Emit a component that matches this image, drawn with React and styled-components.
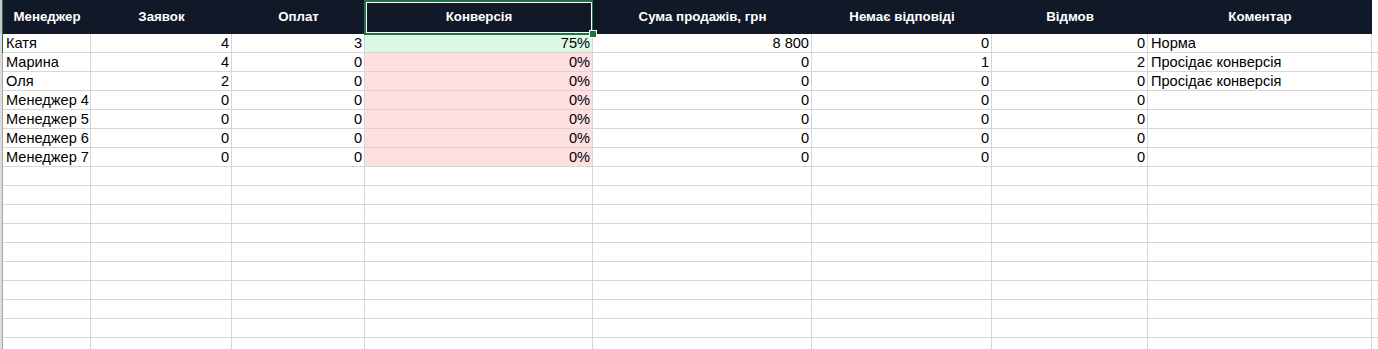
import React from "react";
import styled, { createGlobalStyle, css } from "styled-components";

const Global = createGlobalStyle`
  html, body { margin: 0; padding: 0; background: #fff; }
  body { font-family: "Liberation Sans", Arial, sans-serif; overflow: hidden; }
`;

const COLS = "3px 88px 141px 133px 228px 219px 180px 156px 224px 1fr";

const Sheet = styled.div`
  width: 1378px;
  height: 349px;
  overflow: hidden;
  display: grid;
  grid-template-columns: ${COLS};
  grid-auto-rows: 19px;
  grid-template-rows: 34px;
`;

const Gutter = styled.div`
  box-sizing: border-box;
  background: #dcdcdc;
  border-right: 1px solid ${(p) => (p.$active ? "#217346" : "#a8a8a8")};
  ${(p) => p.$header && css`background: #c8c8c8;`}
`;

const HeadCell = styled.div`
  position: relative;
  box-sizing: border-box;
  background: #111827;
  color: #fff;
  font-weight: bold;
  font-size: 13.3px;
  display: flex;
  align-items: center;
  justify-content: center;
  white-space: nowrap;
  padding-bottom: 1px;
`;

const Selection = styled.div`
  position: absolute;
  inset: 0 -1px -1px -1px;
  border: 2px solid #217346;
  box-shadow: inset 0 0 0 1px #fff;
  pointer-events: none;
`;

const Handle = styled.div`
  position: absolute;
  right: -4px;
  bottom: -4px;
  width: 6px;
  height: 6px;
  background: #217346;
  border: 1px solid #fff;
  z-index: 2;
`;

const EmptyHead = styled.div`
  background: #fff;
`;

const Cell = styled.div`
  box-sizing: border-box;
  border-right: 1px solid #d6d6d6;
  border-bottom: 1px solid #d6d6d6;
  background: ${(p) => p.$bg || "#fff"};
  font-size: 14.6px;
  color: #000;
  line-height: 18px;
  padding: 0 2px 0 3px;
  text-align: ${(p) => (p.$right ? "right" : "left")};
  white-space: nowrap;
  overflow: visible;
`;

const TailCell = styled.div`
  box-sizing: border-box;
  border-bottom: 1px solid #d6d6d6;
`;

const headers = [
  "Менеджер",
  "Заявок",
  "Оплат",
  "Конверсія",
  "Сума продажів, грн",
  "Немає відповіді",
  "Відмов",
  "Коментар",
];

const rows = [
  ["Катя", 4, 3, "75%", "8 800", 0, 0, "Норма"],
  ["Марина", 4, 0, "0%", "0", 1, 2, "Просідає конверсія"],
  ["Оля", 2, 0, "0%", "0", 0, 0, "Просідає конверсія"],
  ["Менеджер 4", 0, 0, "0%", "0", 0, 0, ""],
  ["Менеджер 5", 0, 0, "0%", "0", 0, 0, ""],
  ["Менеджер 6", 0, 0, "0%", "0", 0, 0, ""],
  ["Менеджер 7", 0, 0, "0%", "0", 0, 0, ""],
];

const EMPTY_ROWS = 12;

export default function App() {
  const allRows = [
    ...rows,
    ...Array.from({ length: EMPTY_ROWS }, () => ["", "", "", "", "", "", "", ""]),
  ];
  return (
    <>
      <Global />
      <Sheet>
        <Gutter $header $active />
        {headers.map((h, i) => (
          <HeadCell key={h}>
            {h}
            {i === 3 && (
              <>
                <Selection />
                <Handle />
              </>
            )}
          </HeadCell>
        ))}
        <EmptyHead />
        {allRows.map((r, ri) => (
          <React.Fragment key={ri}>
            <Gutter $active={ri === 0} />
            {r.map((v, ci) => {
              let bg;
              if (ci === 3 && ri < rows.length) bg = ri === 0 ? "#dcf9e6" : "#fee0e0";
              return (
                <Cell key={ci} $right={ci >= 1 && ci <= 6} $bg={bg}>
                  {v}
                </Cell>
              );
            })}
            <TailCell />
          </React.Fragment>
        ))}
      </Sheet>
    </>
  );
}
